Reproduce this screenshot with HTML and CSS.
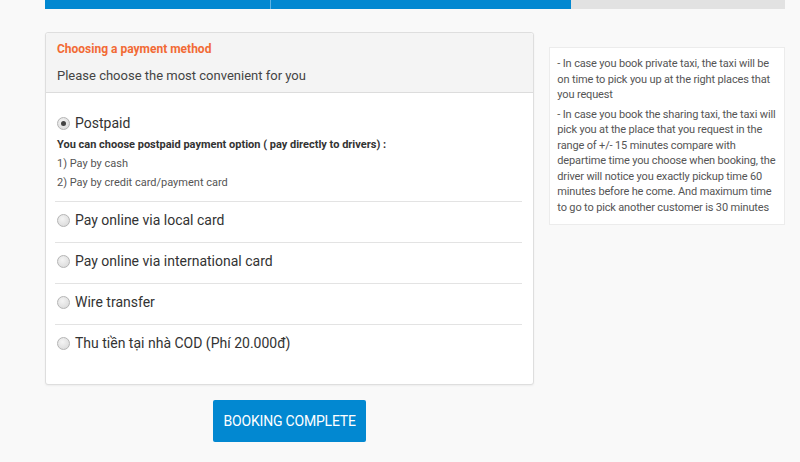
FILE: index.html
```html
<!DOCTYPE html>
<html lang="en">
<head>
    <meta charset="UTF-8">
    <meta name="viewport" content="width=device-width, initial-scale=1.0">
    <title>Booking - Payment</title>
    <link rel="stylesheet" href="styles.css">
</head>
<body>

<div class="page">
    <div class="steps">
        <div class="step done first"></div>
        <div class="step done second"></div>
        <div class="step todo"></div>
    </div>

    <div class="content">
        <div class="left-col">
            <div class="pay-panel">
                <div class="pay-head">
                    <h3 class="pay-title">Choosing a payment method</h3>
                    <p class="pay-sub">Please choose the most convenient for you</p>
                </div>
                <div class="pay-body">
                    <div class="pay-item">
                        <label class="radio-line">
                            <span class="radio checked"></span>
                            <span>Postpaid</span>
                        </label>
                        <div class="pay-desc">
                            <p class="desc-strong">You can choose postpaid payment option ( pay directly to drivers) :</p>
                            <p>1) Pay by cash</p>
                            <p>2) Pay by credit card/payment card</p>
                        </div>
                    </div>
                    <div class="pay-item">
                        <label class="radio-line">
                            <span class="radio"></span>
                            <span>Pay online via local card</span>
                        </label>
                    </div>
                    <div class="pay-item">
                        <label class="radio-line">
                            <span class="radio"></span>
                            <span>Pay online via international card</span>
                        </label>
                    </div>
                    <div class="pay-item">
                        <label class="radio-line">
                            <span class="radio"></span>
                            <span>Wire transfer</span>
                        </label>
                    </div>
                    <div class="pay-item last">
                        <label class="radio-line">
                            <span class="radio"></span>
                            <span>Thu tiền tại nhà COD (Phí 20.000đ)</span>
                        </label>
                    </div>
                </div>
            </div>
            <div class="actions">
                <button class="btn-complete" type="button">BOOKING COMPLETE</button>
            </div>
        </div>

        <div class="note-box">
            <p>- In case you book private taxi, the taxi will be on time to pick you up at the right places that you request</p>
            <p>- In case you book the sharing taxi, the taxi will pick you at the place that you request in the range of +/- 15 minutes compare with departime time you choose when booking, the driver will notice you exactly pickup time 60 minutes before he come. And maximum time to go to pick another customer is 30 minutes</p>
        </div>
    </div>
</div>

</body>
</html>
```

FILE: styles.css
```css
/* Page */
body {
    margin: 0;
    background: #f9f9f9;
    font-family: Roboto, "Liberation Sans", Arial, sans-serif;
    color: #333;
}

.page {
    width: 740px;
    padding-left: 45px;
}

/* Step progress bar */
.steps {
    display: flex;
    height: 9px;
}

.step.first {
    width: 225px;
    background: #0288d1;
    border-right: 1px solid #5fb3e3;
}

.step.second {
    width: 300px;
    background: #0288d1;
}

.step.todo {
    flex: 1;
    background: #e2e2e2;
}

/* Two columns */
.content {
    display: flex;
    gap: 15px;
    margin-top: 23px;
}

.left-col {
    width: 490px;
}

/* Payment panel */
.pay-panel {
    background: #fff;
    border: 1px solid #dedede;
    border-radius: 3px;
    box-shadow: 0 1px 2px rgba(0, 0, 0, 0.05);
}

.pay-head {
    background: #f4f4f4;
    border-bottom: 1px solid #dcdcdc;
    border-radius: 3px 3px 0 0;
    padding: 8px 11px 7px;
}

.pay-title {
    margin: 0;
    font-size: 12px;
    line-height: 16px;
    font-weight: bold;
    color: #f26a35;
}

.pay-sub {
    margin: 10px 0 0;
    font-size: 13px;
    line-height: 18px;
    color: #444;
}

.pay-body {
    padding: 11px 11px 19px 9px;
}

.pay-item {
    padding: 8px 2px 12px;
    border-bottom: 1px solid #e3e3e3;
}

.pay-item:first-child {
    padding-top: 9px;
    padding-bottom: 9px;
}

.pay-item.last {
    border-bottom: none;
}

.radio-line {
    display: flex;
    align-items: center;
    gap: 5px;
    font-size: 14px;
    line-height: 20px;
    color: #333;
}

.radio {
    width: 11px;
    height: 11px;
    border: 1px solid #b5b5b5;
    border-radius: 50%;
    background: radial-gradient(circle at 40% 35%, #f4f4f4, #d6d6d6);
    position: relative;
}

.radio.checked::after {
    content: "";
    position: absolute;
    left: 3px;
    top: 3px;
    width: 5px;
    height: 5px;
    border-radius: 50%;
    background: #444;
}

.pay-desc {
    margin-top: 2px;
    font-size: 11px;
    line-height: 19px;
    color: #555;
}

.pay-desc p {
    margin: 0;
}

.pay-desc .desc-strong {
    font-weight: bold;
    color: #333;
}

/* Submit */
.actions {
    display: flex;
    justify-content: center;
    margin-top: 15px;
}

.btn-complete {
    width: 153px;
    height: 42px;
    border: none;
    border-radius: 2px;
    background: #0288d1;
    color: #fff;
    font-family: Roboto, "Liberation Sans", Arial, sans-serif;
    font-size: 14px;
    letter-spacing: -0.2px;
    cursor: pointer;
}

/* Info note */
.note-box {
    align-self: flex-start;
    width: 224px;
    margin-top: 15px;
    padding: 8px 3px 9px 7px;
    background: #fff;
    border: 1px solid #ececec;
    font-size: 11px;
    line-height: 15.5px;
    letter-spacing: -0.15px;
    color: #555;
}

.note-box p {
    margin: 0 0 4px;
}

.note-box p:last-child {
    margin-bottom: 0;
}
```
